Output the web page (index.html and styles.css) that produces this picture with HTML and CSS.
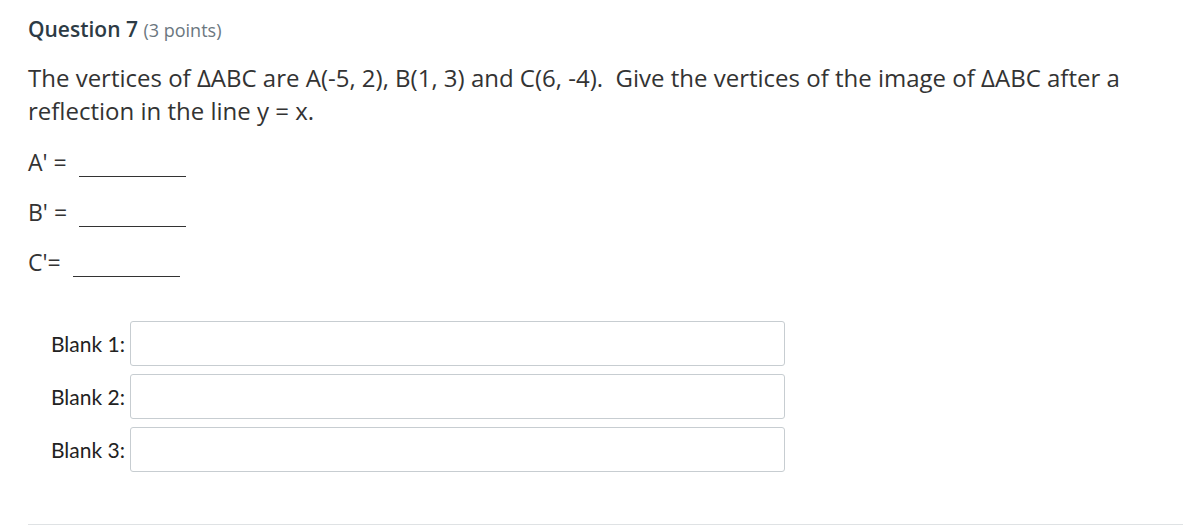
FILE: index.html
```html
<!DOCTYPE html>
<html>
<head>
<meta charset="utf-8">
<link rel="stylesheet" href="styles.css">
</head>
<body>
<div class="question">
  <div class="header"><span class="qname">Question 7</span> <span class="pts">(3 points)</span></div>
  <div class="text">
    <p class="stem">The vertices of ΔABC are A(-5, 2), B(1, 3) and C(6, -4).&nbsp; Give the vertices of the image of ΔABC after a reflection in the line y = x.</p>
    <p class="ans">A' =<span class="line"></span></p>
    <p class="ans">B' =<span class="line"></span></p>
    <p class="ans">C'=<span class="line"></span></p>
  </div>
  <div class="blanks">
    <div class="blank"><label>Blank 1:</label><div class="box"></div></div>
    <div class="blank"><label>Blank 2:</label><div class="box"></div></div>
    <div class="blank"><label>Blank 3:</label><div class="box"></div></div>
  </div>
  <div class="rule"></div>
</div>
</body>
</html>
```
FILE: styles.css
```css
html, body { margin: 0; padding: 0; background: #fff; }
body { font-family: "Open Sans", sans-serif; color: #2d3b45; }
.question { padding: 14px 0 0 28px; }
.header { font-size: 21px; line-height: 30px; }
.qname { font-weight: 600; color: #2d3b45; }
.pts { font-size: 18px; color: #6b7780; }
.text { font-size: 24px; line-height: 33px; color: #333; margin-top: 16px; }
.stem { margin: 0; width: 1140px; }
.ans { margin: 0; height: 50px; display: flex; align-items: flex-start; padding-top: 22px; box-sizing: border-box; }
.ans { font-size: 23px; line-height: 26px; }
.line { display: inline-block; width: 107px; border-bottom: 1px solid #333; height: 27px; margin-left: 12px; }
.blanks { margin-top: 44px; padding-left: 23px; display: flex; flex-direction: column; gap: 8px; }
.blank { display: flex; align-items: center; }
.blank label { font-family: "Lato", sans-serif; font-size: 21px; color: #222; width: 79px; }
.box { width: 653px; height: 43px; border: 1px solid #c7cdd1; border-radius: 3px; }
.rule { margin-top: 52px; height: 1px; background: #dfe2e4; }
```
